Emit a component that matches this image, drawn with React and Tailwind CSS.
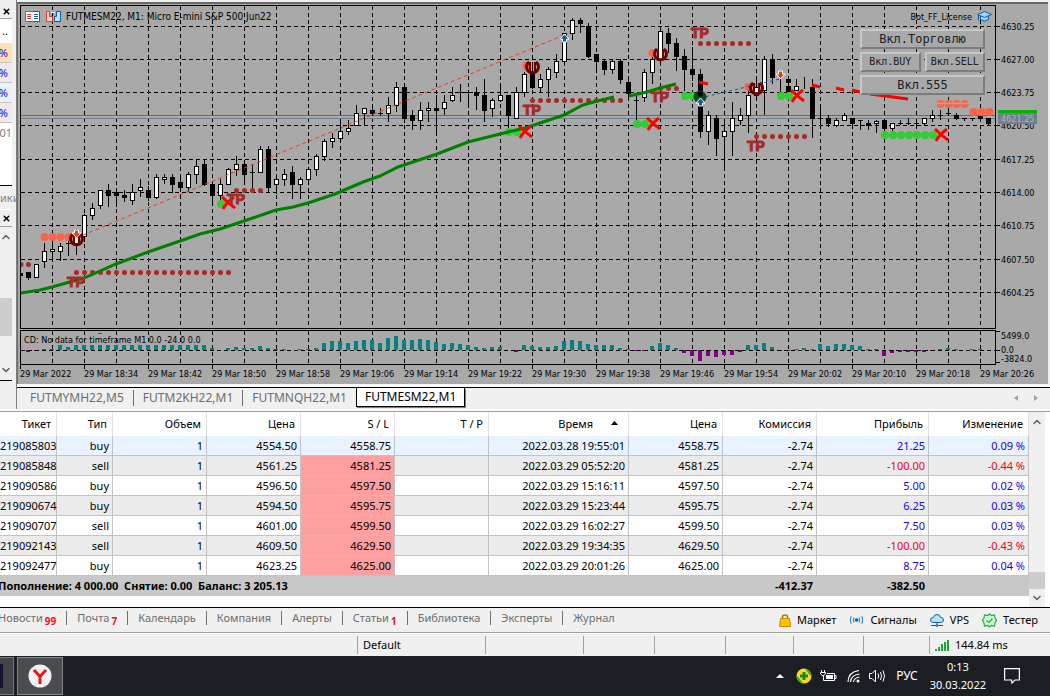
import { ChevronDown, ChevronUp, X } from "lucide-react";

// x, high, low, body top, body bottom, type (w = up, b = down, d = doji)
const candles = [
  [28, 272, 279, 272, 277, "b"], [36, 264, 277, 264, 277, "w"], [44, 243, 267, 251, 261, "w"],
  [52, 241, 259, 249, 251, "w"], [60, 243, 260, 246, 251, "w"], [68, 237, 255, 243, 243, "d"],
  [76, 229, 254, 235, 243, "w"], [84, 214, 241, 215, 236, "w"], [92, 203, 219, 208, 215, "w"],
  [100, 190, 208, 190, 205, "w"], [108, 184, 206, 190, 195, "b"], [116, 190, 206, 192, 195, "b"],
  [124, 190, 201, 195, 197, "b"], [132, 184, 204, 192, 200, "w"], [140, 179, 196, 187, 190, "w"],
  [148, 186, 200, 190, 197, "b"], [156, 174, 198, 177, 197, "w"], [164, 174, 183, 177, 179, "w"],
  [172, 174, 192, 177, 184, "b"], [180, 177, 191, 182, 187, "b"], [188, 172, 191, 174, 187, "w"],
  [196, 159, 183, 166, 174, "w"], [204, 159, 185, 164, 184, "b"], [212, 184, 205, 184, 195, "b"],
  [220, 179, 205, 184, 195, "w"], [228, 168, 184, 169, 184, "w"], [236, 156, 175, 164, 169, "w"],
  [244, 162, 180, 164, 174, "b"], [252, 164, 188, 172, 172, "d"], [260, 146, 172, 149, 172, "w"],
  [268, 146, 191, 149, 187, "b"], [276, 177, 193, 179, 184, "w"], [284, 169, 185, 174, 179, "w"],
  [292, 166, 198, 172, 184, "b"], [300, 177, 198, 179, 184, "w"], [308, 167, 183, 169, 179, "w"],
  [316, 154, 175, 156, 169, "w"], [324, 139, 160, 141, 156, "w"], [332, 133, 147, 138, 141, "w"],
  [340, 119, 140, 131, 138, "w"], [348, 120, 134, 128, 131, "w"], [356, 105, 125, 113, 125, "w"],
  [364, 108, 125, 108, 113, "w"], [372, 107, 115, 110, 113, "b"], [380, 108, 115, 113, 113, "d"],
  [388, 97, 121, 105, 113, "w"], [396, 82, 111, 87, 105, "w"], [404, 87, 122, 87, 118, "b"],
  [412, 110, 129, 115, 120, "b"], [420, 102, 129, 110, 120, "w"], [428, 102, 121, 108, 110, "w"],
  [436, 95, 133, 108, 110, "b"], [444, 95, 114, 102, 108, "w"], [452, 87, 101, 95, 100, "w"],
  [460, 84, 101, 92, 92, "d"], [468, 92, 106, 92, 92, "d"], [476, 87, 109, 92, 95, "b"],
  [484, 79, 121, 95, 110, "b"], [492, 98, 116, 100, 108, "w"], [500, 83, 101, 95, 100, "w"],
  [508, 95, 127, 95, 115, "b"], [516, 87, 118, 92, 118, "w"], [524, 72, 96, 74, 92, "w"],
  [532, 62, 88, 72, 87, "b"], [540, 74, 91, 79, 87, "w"], [548, 67, 96, 69, 79, "w"],
  [556, 54, 77, 61, 72, "w"], [564, 33, 61, 33, 61, "w"], [572, 18, 39, 20, 33, "w"],
  [580, 18, 32, 20, 23, "b"], [588, 23, 57, 26, 56, "b"], [596, 54, 69, 54, 61, "b"],
  [604, 59, 74, 61, 69, "b"], [612, 59, 73, 61, 69, "w"], [620, 59, 83, 61, 79, "b"],
  [628, 77, 98, 82, 93, "b"], [636, 96, 120, 100, 100, "d"], [644, 69, 101, 72, 97, "w"],
  [652, 53, 83, 59, 72, "w"], [660, 28, 61, 31, 59, "w"], [668, 28, 52, 33, 43, "b"],
  [676, 38, 70, 43, 56, "b"], [684, 49, 90, 56, 69, "b"], [692, 47, 80, 69, 74, "b"],
  [700, 69, 137, 74, 131, "b"], [708, 111, 144, 115, 131, "w"], [716, 115, 155, 118, 138, "b"],
  [724, 119, 169, 131, 136, "w"], [732, 102, 155, 118, 131, "w"], [740, 108, 124, 115, 120, "w"],
  [748, 90, 132, 95, 115, "w"], [756, 80, 96, 87, 95, "w"], [764, 56, 114, 59, 90, "w"],
  [772, 54, 83, 59, 77, "b"], [780, 78, 92, 92, 92, "d"], [788, 79, 92, 79, 82, "b"],
  [788, 86, 92, 86, 91, "b"], [796, 79, 90, 86, 90, "w"], [804, 77, 88, 88, 88, "n"],
  [812, 79, 137, 87, 118, "b"], [820, 107, 126, 118, 118, "d"], [828, 115, 126, 118, 123, "b"],
  [836, 118, 126, 120, 125, "w"], [844, 113, 120, 115, 120, "w"], [852, 118, 125, 118, 123, "b"],
  [860, 120, 129, 120, 120, "d"], [868, 120, 129, 123, 125, "b"], [876, 120, 132, 121, 123, "w"],
  [884, 119, 130, 120, 128, "b"], [892, 123, 130, 123, 128, "w"], [900, 120, 124, 123, 123, "d"],
  [908, 118, 124, 123, 123, "d"], [916, 121, 126, 123, 123, "d"], [924, 118, 124, 118, 123, "w"],
  [932, 110, 121, 115, 118, "w"], [940, 110, 119, 115, 115, "d"], [948, 108, 115, 113, 113, "d"],
  [956, 113, 119, 115, 118, "b"], [964, 118, 120, 118, 118, "d"], [972, 118, 120, 118, 118, "d"],
  [980, 113, 121, 116, 118, "b"], [988, 118, 124, 118, 123, "b"],
];

// volume delta, one bar every 8px starting at x = 28
const delta = [
  -2, -1, 1, 1, 5, 3, 5, 5, 5, 5, 5, 5, 5, 5, 5, 5, 5, 5, 5, 5, 5, 5, 5, 2, 0, 2, 3, 2, 2, 4, 2, 1, 1, 0, 1, 1, 2,
  7, 9, 9, 7, 9, 10, 10, 7, 12, 14, 10, 10, 11, 10, 8, 6, 7, 6, 5, 3, 2, 3, 3, 0, -2, 5, 4, 3, 3, 4, 9, 10, 9, 6,
  5, 5, 5, 2, 1, -1, -1, 4, 7, 5, 2, -3, -6, -11, -6, -7, -5, -5, -2, 5, 5, 7, 3, -1, -1, 1, 2, 1, 6, 4, 6, 6, 5,
  4, 1, 1, -6, -3, -2, -2, -2, -2, -1, 1, 2, 1, 0, 1, 1,
];

const prices = [
  [26, "4630.25"], [59, "4627.00"], [92, "4623.75"], [125, "4620.50"], [159, "4617.25"],
  [192, "4614.00"], [225, "4610.75"], [259, "4607.50"], [292, "4604.25"],
];

const times = [
  "2022", "18:34", "18:42", "18:50", "18:58", "19:06", "19:14", "19:22",
  "19:30", "19:38", "19:46", "19:54", "20:02", "20:10", "20:18", "20:26",
];

// dotted take-profit levels: from x, to x, y
const levels = [
  [28, 28, 264], [76, 228, 272], [236, 260, 190], [532, 620, 100],
  [660, 676, 88], [700, 748, 43], [756, 804, 136],
];
const tpLabels = [[76, 287], [236, 204], [532, 115], [660, 102], [700, 38], [756, 151]];
const sellDots = [
  [44, 237], [52, 237], [60, 237], [68, 237], [526, 66], [652, 53], [748, 87],
  [940, 104], [948, 104], [956, 104], [964, 104], [973, 112], [981, 112], [989, 112],
];
const buyDots = [
  [221, 204], [509, 132], [517, 132], [637, 124], [645, 124], [685, 96], [692, 96], [781, 96],
  [789, 96], [885, 135], [893, 135], [901, 135], [909, 135], [917, 135], [925, 135], [933, 135],
];
const crosses = [[228, 203], [525, 132], [653, 124], [797, 96], [941, 135]];
const entries = [[76, 239], [532, 67], [660, 54], [756, 88]];

function range(from, to, step) {
  const out = [];
  for (let i = from; i <= to; i += step) out.push(i);
  return out;
}

function Candle({ c }) {
  const [x, high, low, top, bottom, type] = c;
  return (
    <g>
      <rect x={x} y={high} width="1" height={low - high + 1} />
      {type === "d" && <rect x={x - 2} y={top} width="5" height="1" />}
      {type === "b" && <rect x={x - 2} y={top} width="5" height={bottom - top + 1} />}
      {type === "w" && (
        <>
          <rect x={x - 2} y={top} width="5" height={bottom - top + 1} />
          <rect x={x - 1} y={top + 1} width="3" height={bottom - top - 1} fill="#fff" />
        </>
      )}
    </g>
  );
}

function Arrow({ x, y, up }) {
  return (
    <path
      d={up ? "M0.500 -4L5 1H2.500V4H-1.500V1H-4Z" : "M0.500 4L5 -1H2.500V-4H-1.500V-1H-4Z"}
      transform={`translate(${x} ${y})`}
      fill={up ? "#0b5cad" : "#e8401c"}
      stroke="#fff"
    />
  );
}

function Chart() {
  return (
    <svg
      viewBox="18 4 1030 380"
      className="block w-full h-auto bg-[#a9a9a9] font-['DejaVu_Sans_Condensed','DejaVu_Sans',sans-serif] text-[9px]"
    >
      <g shapeRendering="crispEdges">
        <g stroke="#000" strokeDasharray="4 3">
          {range(52, 980, 32).map((x) => (
            <g key={x}>
              <line x1={x + 0.5} y1="6" x2={x + 0.5} y2="328" />
              <line x1={x + 0.5} y1="331" x2={x + 0.5} y2="364" />
            </g>
          ))}
          {prices.map(([y]) => (
            <line key={y} x1="21" y1={y + 0.5} x2="995" y2={y + 0.5} />
          ))}
        </g>
        <rect x="20" y="115" width="975" height="1" fill="#00b400" />
        <rect x="20" y="118" width="975" height="1" fill="#708090" />
        <rect x="20.5" y="5.5" width="975" height="323" fill="none" stroke="#000" />
        <rect x="20.5" y="330.5" width="975" height="34" fill="none" stroke="#000" />
        <rect x="21" y="273" width="2" height="3" />
        {candles.map((c, i) => (
          <Candle key={i} c={c} />
        ))}
        {delta.map((v, i) => (
          <rect
            key={i}
            x={26 + i * 8}
            y={v > 0 ? 350 - v : 350}
            width="4"
            height={Math.abs(v)}
            fill={v > 0 ? "#008080" : "#800080"}
          />
        ))}
        <rect x="98" y="333" width="4" height="1" fill="#008080" />
        <line x1="21" y1="350.5" x2="995" y2="350.5" stroke="#000" strokeDasharray="4 3" />
        {prices.map(([y]) => (
          <rect key={y} x="996" y={y} width="4" height="1" />
        ))}
        {[331, 350, 362].map((y) => (
          <rect key={y} x="996" y={y} width="4" height="1" />
        ))}
        {times.map((t, i) => (
          <rect key={t} x={20 + i * 64} y="365" width="1" height="4" />
        ))}
      </g>

      <path d="M21 262A2.500 2.500 0 0 1 21 267Z" fill="#a52a2a" />
      {levels.map(([from, to, y]) =>
        range(from, to, 8).map((x) => <circle key={`${x}-${y}`} cx={x + 0.5} cy={y + 0.5} r="2.5" fill="#a52a2a" />)
      )}
      {sellDots.map(([x, y]) => (
        <circle key={x} cx={x + 0.5} cy={y} r="4" fill="#ff6347" />
      ))}
      <path d="M936 103.5H970" stroke="#a9a9a9" strokeWidth="1.5" />
      {buyDots.map(([x, y]) => (
        <circle key={x} cx={x} cy={y} r="4" fill="#32cd32" />
      ))}

      <g fill="none" stroke="#008000" strokeWidth="3">
        <path d="M21 293L40 290L52 287L84 278L100 271L116 264L148 252L180 241L200 234L220 229L244 221L276 210L293 207L308 203L335 194L363 182L380 176L398 167L437 154L468 142L500 134L525 128L543 122L564 115L583 105L597 101L614 97" />
        <path d="M629 96L647 92L660 88L676 84" />
      </g>
      <path
        d="M699 82L708 84M812 85L820 87M836 88L844 90M852 90L860 92M870 94L908 99"
        stroke="#f00"
        strokeWidth="3"
      />
      <path d="M76 238L564 35" stroke="#e8401c" strokeDasharray="4 3" />
      <path d="M700 98L780 79" stroke="#0b5cad" strokeDasharray="3 3" />

      {entries.map(([x, y]) => (
        <g key={x} fill="none" stroke="#700000">
          <path d={`M${x - 3} ${y - 5}A6 6 0 1 0 ${x + 4} ${y - 5}`} strokeWidth="3" />
          <path d={`M${x - 2} ${y - 5}V${y + 4}M${x + 3} ${y - 5}V${y + 4}`} strokeWidth="2" />
        </g>
      ))}
      <circle cx="700" cy="97" r="6.5" fill="#0c4a1c" />
      <circle cx="700" cy="94" r="2.5" />
      {crosses.map(([x, y]) => (
        <path
          key={x}
          d={`M${x - 6} ${y - 6}Q${x} ${y} ${x + 7} ${y + 5}M${x + 6} ${y - 6}Q${x - 2} ${y} ${x - 5} ${y + 6}`}
          fill="none"
          stroke="#f00"
          strokeWidth="3"
        />
      ))}
      <Arrow x={76} y={234} />
      <Arrow x={780} y={75} />
      <Arrow x={564} y={38} up />
      <Arrow x={700} y={102} up />

      <g
        className="font-['Liberation_Sans',sans-serif] text-[14px] font-bold"
        fill="#a52a2a"
        stroke="#a52a2a"
        textAnchor="middle"
      >
        {tpLabels.map(([x, y]) => (
          <text key={x} x={x} y={y}>TP</text>
        ))}
      </g>

      {/* header icons */}
      <g fill="#fff" strokeWidth="1">
        <path d="M32.5 11.5H25.5V21.5H32.5" stroke="#d93a34" />
        <path d="M32.5 11.5H39.5V21.5H32.5" stroke="#0b5cad" />
        <path d="M27 14.5H31M27 16.5H31M27 18.5H31" stroke="#d93a34" />
        <path d="M34 14.5H38M34 16.5H38M34 18.5H38" stroke="#0b5cad" />
        <path d="M46.5 11.5H49.5V16.5H52.5V21.5H46.5Z" fill="#ffd0c8" stroke="#d93a34" />
        <path d="M60.5 11.5H56.5V16.5H54.5V21.5H60.5Z" fill="#b9e2fb" stroke="#0b5cad" />
        <path d="M51 12.5H55" stroke="#fff" />
      </g>
      <g fill="#9fd6f7" stroke="#0b5cad">
        <path d="M980.5 14.5V19.5Q984.500 22.500 988.500 19.500V14.500Z" />
        <path d="M977.500 14.500L984.500 11.500L991.500 14.500L984.500 17.500Z" />
        <path d="M978.500 15V20.500" />
      </g>

      <text x="66" y="20" className="text-[10px]">FUTMESM22, M1:  Micro E-mini S&amp;P 500 Jun22</text>
      <text x="972" y="20" textAnchor="end">Bot_FF_License</text>
      <text x="24" y="343">CD: No data for timeframe M1 0.0 -24.0 0.0</text>
      {prices.map(([y, t]) => (
        <text key={y} x="1001" y={y + 4}>{t}</text>
      ))}
      <text x="1001" y="339">5499.0</text>
      <text x="1001" y="353">0.0</text>
      <text x="1001" y="362">-3824.0</text>
      {times.map((t, i) => (
        <text key={t} x={20 + i * 64} y="377">29 Mar {t}</text>
      ))}
      <rect x="998" y="110" width="39" height="3" fill="#00b400" />
      <rect x="998" y="113" width="39" height="11" fill="#708090" />
      <text x="1001" y="122" fill="#b4b4b4">4621.25</text>
    </svg>
  );
}

const chartBtn =
  "flex-1 h-5 flex items-center justify-center bg-[#a9a9a9] border-2 border-t-[#c8c8c8] border-l-[#c8c8c8] border-b-[#7d7d7d] border-r-[#7d7d7d] text-[#202020] font-['DejaVu_Sans_Mono',monospace]";

function ChartButtons() {
  return (
    <div className="absolute top-[25px] right-[63px] w-[125px] flex flex-col gap-[3px]">
      <div className="flex"><button className={`${chartBtn} text-[12px]`}>Вкл.Торговлю</button></div>
      <div className="flex gap-1">
        <button className={`${chartBtn} text-[10px]`}>Вкл.BUY</button>
        <button className={`${chartBtn} text-[10px]`}>Вкл.SELL</button>
      </div>
      <div className="flex"><button className={`${chartBtn} text-[12px]`}>Вкл.555</button></div>
    </div>
  );
}

function Sidebar() {
  const cell = "h-5 pr-1 flex items-center justify-end border-b border-[#c3c3c3] text-[#1a00f0]";
  return (
    <aside className="w-[17px] shrink-0 pt-1 pr-1 overflow-hidden flex flex-col border-r border-[#808080]">
      <button className="h-[14px] shrink-0 flex items-center justify-center" aria-label="Закрыть">
        <X size={9} strokeWidth={4} />
      </button>
      <div className="h-[168px] shrink-0 bg-white border-t border-[#a0a0a0] border-b border-b-black">
        <div className="h-6 pr-1 flex items-center justify-end">..</div>
        <div className={`${cell} bg-[#ffe1b0]`}>%</div>
        <div className={`${cell} bg-[#ebebeb]`}>%</div>
        <div className={`${cell} bg-[#e8f3ff]`}>%</div>
        <div className={`${cell} bg-[#ebebeb]`}>%</div>
        <div className="h-5 flex items-center justify-end text-[#808080]">01</div>
      </div>
      <div className="h-[24px] shrink-0 flex items-center text-[#808080] border-b border-white">ики</div>
      <button className="h-4 shrink-0 flex items-center justify-center" aria-label="Закрыть">
        <X size={9} strokeWidth={4} />
      </button>
      <div className="flex-1 flex flex-col items-center border-t border-[#a0a0a0] border-b border-b-black mb-7">
        <ChevronUp size={12} strokeWidth={3} className="mt-1 text-[#606060]" />
        <div className="flex-1" />
        <div className="w-full h-[38px] bg-[#cdcdcd]" />
        <div className="h-7" />
        <ChevronDown size={12} strokeWidth={3} className="mb-1 text-[#606060]" />
      </div>
    </aside>
  );
}

function ChartTabs() {
  const tab = "h-4 mt-0.5 px-[9px] flex items-center";
  return (
    <div className="h-[22px] flex items-start border-t border-black text-[12px] text-[#6d6d6d]">
      <nav className="flex items-start pl-1">
        <button className={`${tab} border-r border-[#6d6d6d]`}>FUTMYMH22,M5</button>
        <button className={`${tab} border-r border-[#6d6d6d]`}>FUTM2KH22,M1</button>
        <button className={tab}>FUTMNQH22,M1</button>
        <button className="h-[19px] px-2 flex items-center bg-white text-black border-x border-b border-black shadow-[1px_1px_0_#808080]">
          FUTMESM22,M1
        </button>
      </nav>
      <div className="flex-1 flex justify-end gap-4 pt-[7px] pr-3 text-[#a0a0a0]">
        <svg width="4" height="6"><path d="M4 0V6L0 3Z" fill="currentColor" /></svg>
        <svg width="4" height="6"><path d="M0 0V6L4 3Z" fill="currentColor" /></svg>
      </div>
    </div>
  );
}

const deals = [
  ["219085803", "buy", "4554.50", "4558.75", "2022.03.28 19:55:01", "4558.75", "21.25", "0.09 %"],
  ["219085848", "sell", "4561.25", "4581.25", "2022.03.29 05:52:20", "4581.25", "-100.00", "-0.44 %"],
  ["219090586", "buy", "4596.50", "4597.50", "2022.03.29 15:16:11", "4597.50", "5.00", "0.02 %"],
  ["219090674", "buy", "4594.50", "4595.75", "2022.03.29 15:23:44", "4595.75", "6.25", "0.03 %"],
  ["219090707", "sell", "4601.00", "4599.50", "2022.03.29 16:02:27", "4599.50", "7.50", "0.03 %"],
  ["219092143", "sell", "4609.50", "4629.50", "2022.03.29 19:34:35", "4629.50", "-100.00", "-0.43 %"],
  ["219092477", "buy", "4623.25", "4625.00", "2022.03.29 20:01:26", "4625.00", "8.75", "0.04 %"],
];

const headers = ["Тикет", "Тип", "Объем", "Цена", "S / L", "T / P", "Время", "Цена", "Комиссия", "Прибыль", "Изменение"];

function DealsTable() {
  const td = "border-r border-b border-[#c3c3c3] p-0 pr-[3px] whitespace-nowrap";
  return (
    <div className="flex border-t border-[#a0a0a0] border-b border-b-black bg-white">
      <div className="flex-1 min-w-0 overflow-hidden pb-[11px]">
        <table className="w-full table-fixed border-separate border-spacing-0 text-right">
          <colgroup>
            <col className="w-[57px]" />
            <col className="w-[56px]" />
            <col className="w-[94px]" />
            <col className="w-[94px]" />
            <col className="w-[94px]" />
            <col className="w-[94px]" />
            <col className="w-[140px]" />
            <col className="w-[94px]" />
            <col className="w-[94px]" />
            <col className="w-[112px]" />
            <col className="w-[100px]" />
          </colgroup>
          <thead>
            <tr className="h-6">
              {headers.map((h, i) => (
                <th key={i} className="font-normal border-r border-[#e2e2e2] p-0 pr-[5px] whitespace-nowrap">
                  {h}
                  {h === "Время" && (
                    <svg width="7" height="4" className="inline ml-[18px] mr-[5px] mb-1"><path d="M0 4H7L3.5 0Z" /></svg>
                  )}
                </th>
              ))}
            </tr>
          </thead>
          <tbody>
            {deals.map((d, i) => {
              const color = d[6].startsWith("-") ? "text-[#f00014]" : "text-[#1a00f0]";
              return (
                <tr key={d[0]} className={`h-5 ${i === 0 ? "bg-[#e8f3ff]" : i % 2 ? "bg-[#ebebeb]" : "bg-white"}`}>
                  <td className="border-r border-b border-[#c3c3c3] p-0 whitespace-nowrap">{d[0]}</td>
                  <td className={td}>{d[1]}</td>
                  <td className={td}>1</td>
                  <td className={td}>{d[2]}</td>
                  <td className={`${td} ${i > 0 ? "bg-[#ff9f9f]" : ""}`}>{d[3]}</td>
                  <td className={td}></td>
                  <td className={td}>{d[4]}</td>
                  <td className={td}>{d[5]}</td>
                  <td className={td}>-2.74</td>
                  <td className={`${td} ${color}`}>{d[6]}</td>
                  <td className={`${td} ${color}`}>{d[7]}</td>
                </tr>
              );
            })}
          </tbody>
          <tfoot>
            <tr className="h-5 bg-[#c8c8c8] font-bold">
              <td colSpan={8} className="text-left p-0 whitespace-pre">
                <span className="-ml-0.5">Пополнение: 4 000.00  Снятие: 0.00  Баланс: 3 205.13</span>
              </td>
              <td className="pr-1">-412.37</td>
              <td className="pr-1">-382.50</td>
              <td></td>
            </tr>
          </tfoot>
        </table>
      </div>
      <div className="w-4 mr-[5px] flex flex-col items-center bg-[#f0f0f0] text-[#606060]">
        <ChevronUp size={12} strokeWidth={3} className="mt-1" />
        <div className="flex-1" />
        <div className="w-full h-[17px] bg-[#cdcdcd]" />
        <ChevronDown size={12} strokeWidth={3} className="my-[3px]" />
      </div>
    </div>
  );
}

const toolTabs = [
  ["Новости", "99"], ["Почта", "7"], ["Календарь"], ["Компания"], ["Алерты"],
  ["Статьи", "1"], ["Библиотека"], ["Эксперты"], ["Журнал"],
];

function ToolboxTabs() {
  return (
    <div className="h-[25px] flex items-center justify-between border-b border-[#a0a0a0]">
      <nav className="flex -ml-3 -mt-1 text-[#6d6d6d]">
        {toolTabs.map(([name, count]) => (
          <button key={name} className="h-[14px] px-[10px] flex items-center border-r border-[#6d6d6d] last:border-0">
            {name}
            {count && <sub className="ml-0.5 text-[10px] font-bold text-[#f01020]">{count}</sub>}
          </button>
        ))}
      </nav>
      <div className="flex items-center gap-[13px] pr-3 text-black">
        <button className="flex items-center gap-1.5">
          <svg width="12" height="13" viewBox="0 0 12 13">
            <path d="M3.500 5V3Q3.500 1 6 1T8.500 3V5" fill="none" stroke="#a87400" strokeWidth="1.500" />
            <path d="M1.500 4.500H10.500L11.500 12.500H.5Z" fill="#ffc400" stroke="#c88a00" />
          </svg>
          Маркет
        </button>
        <button className="flex items-center gap-1.5">
          <svg width="15" height="10" viewBox="0 0 16 10" fill="none" stroke="#3486c8">
            <circle cx="8" cy="5" r="1.800" fill="#0b5cad" stroke="none" />
            <path d="M5.500 2.500Q4 5 5.500 7.500M2.500 1Q.5 5 2.500 9M10.500 2.500Q12 5 10.500 7.500M13.500 1Q15.500 5 13.500 9" strokeWidth="1.200" />
          </svg>
          Сигналы
        </button>
        <button className="flex items-center gap-1.5">
          <svg width="14" height="13" viewBox="0 0 14 13" stroke="#0b5cad">
            <path d="M3.500 8.500Q.5 8.500 .5 6T3.500 3.500Q4 .5 7 .5T10.500 3.500Q13.500 3.500 13.500 6T10.500 8.500Z" fill="#b9e2fb" />
            <path d="M7 9V10.500M1 11.500H13" fill="none" />
            <circle cx="7" cy="11.500" r="1" fill="#b9e2fb" />
          </svg>
          VPS
        </button>
        <button className="flex items-center gap-1.5">
          <svg width="15" height="15" viewBox="0 0 15 15" fill="#d4f7d8" stroke="#1faa3c" strokeWidth="1.200">
            <path d="M7.500 1L9.500 2.500L12.500 2L13 5L14.500 7.500L13 10L12.500 13L9.500 12.500L7.500 14L5.500 12.500L2.500 13L2 10L.5 7.500L2 5L2.500 2L5.500 2.500Z" />
            <path d="M4.500 7.500L7 9.500L10.500 5.500" fill="none" />
          </svg>
          Тестер
        </button>
      </div>
    </div>
  );
}

function StatusBar() {
  const cell = "h-[18px] shrink-0 border-l border-[#a0a0a0]";
  return (
    <footer className="h-[23px] flex items-center border-t border-white">
      <div className="flex-1" />
      <div className={`${cell} w-[128px] pl-[5px] flex items-center`}>Default</div>
      <div className={`${cell} w-[98px]`} />
      <div className={`${cell} w-[71px]`} />
      <div className={`${cell} w-[71px]`} />
      <div className={`${cell} w-[68px]`} />
      <div className={`${cell} w-[70px]`} />
      <div className={`${cell} w-[66px]`} />
      <div className={`${cell} w-[121px] pl-[5px] flex items-center gap-1.5`}>
        <svg width="14" height="11" fill="#18a838" shapeRendering="crispEdges">
          <path d="M0 9H2V11H0ZM3 7H5V11H3ZM6 4H8V11H6ZM9 2H11V11H9ZM12 0H14V11H12Z" />
        </svg>
        144.84 ms
      </div>
    </footer>
  );
}

function Taskbar() {
  return (
    <div className="h-10 flex items-center bg-[#1b1f23] text-white">
      <button className="w-[14px] h-[38px] flex items-center border border-l-0 border-[#77797c] bg-[#434548]" aria-label="Окно">
        <span className="w-[3px] h-6 bg-[#131536]" />
      </button>
      <button className="w-[46px] h-[38px] ml-[3px] flex items-center justify-center border border-[#85878a] bg-[#4a4c4f]" aria-label="Яндекс">
        <svg width="24" height="24" viewBox="0 0 24 24">
          <circle cx="12" cy="12" r="11.500" fill="#f2f2f2" />
          <path d="M6 6L12 12.500L18 6M12 12V20" fill="none" stroke="#e01b1b" strokeWidth="3" />
        </svg>
      </button>
      <div className="flex-1" />
      <div className="flex items-center pr-[30px]">
        <svg width="8" height="4" className="mr-3"><path d="M0 4H8L4 0Z" fill="#fff" /></svg>
        <svg width="16" height="16" viewBox="0 0 16 16" className="mr-2">
          <circle cx="8" cy="8" r="7.500" fill="#ffd51e" />
          <path d="M9 .5A7.500 7.500 0 0 1 15.500 8L13 6ZM7 15.500A7.500 7.500 0 0 1 .5 8L3 10Z" fill="#36a22f" />
          <path d="M8 4V12M4 8H12" stroke="#168a26" strokeWidth="3" />
        </svg>
        <svg width="17" height="12" viewBox="0 0 17 12" className="mr-2.5" fill="none" stroke="#fff">
          <path d="M1.500 0V2M4.500 0V2M.5 2.500H5.500V4L3 6L.5 4ZM3.500 6V10.500H14.500V3.500H7M14.500 5.500H16V8.500H14.500" />
          <rect x="6" y="5" width="7" height="4" fill="#fff" stroke="none" />
        </svg>
        <svg width="14" height="13" viewBox="0 0 14 13" className="mr-2" fill="none" stroke="#fff">
          <path d="M1 12Q1 2 12 .5M3.500 12Q4 5 12.500 4M6.500 12Q7 8 12.500 7" strokeWidth="1.200" />
          <circle cx="11" cy="11" r="1.500" fill="#fff" stroke="none" />
        </svg>
        <svg width="17" height="14" viewBox="0 0 17 14" className="mr-2.5" fill="none" stroke="#fff">
          <path d="M.5 4.500H3L6.500 1V13L3 9.500H.5ZM9 4.500Q10.500 7 9 9.500M11.500 3Q13.500 7 11.500 11M14 1.500Q17 7 14 12.500" />
        </svg>
        <span className="text-[12px] mr-3">РУС</span>
        <div className="flex flex-col items-center leading-[18px] mr-[18px]">
          <span>0:13</span>
          <span>30.03.2022</span>
        </div>
        <svg width="16" height="16" viewBox="0 0 16 16" fill="none" stroke="#fff" strokeWidth="1.200">
          <path d="M.6 .6H15.400V12H11L8 15L7.500 12H.6Z" />
        </svg>
      </div>
    </div>
  );
}

export default function App() {
  return (
    <div className="min-h-screen overflow-hidden flex flex-col bg-[#f0f0f0] text-black text-[11px] leading-4 font-['Noto_Sans',sans-serif]">
      <div className="flex">
        <Sidebar />
        <div className="flex-1 min-w-0 pt-0.5">
          <div className="border-t border-l border-[#696969] border-t-2 mr-0.5 relative">
            <Chart />
            <ChartButtons />
          </div>
          <div className="h-[3px] bg-[#f8f8f8]" />
          <ChartTabs />
        </div>
      </div>
      <div className="h-0.5 bg-[#fafafa]" />
      <DealsTable />
      <ToolboxTabs />
      <StatusBar />
      <Taskbar />
    </div>
  );
}
